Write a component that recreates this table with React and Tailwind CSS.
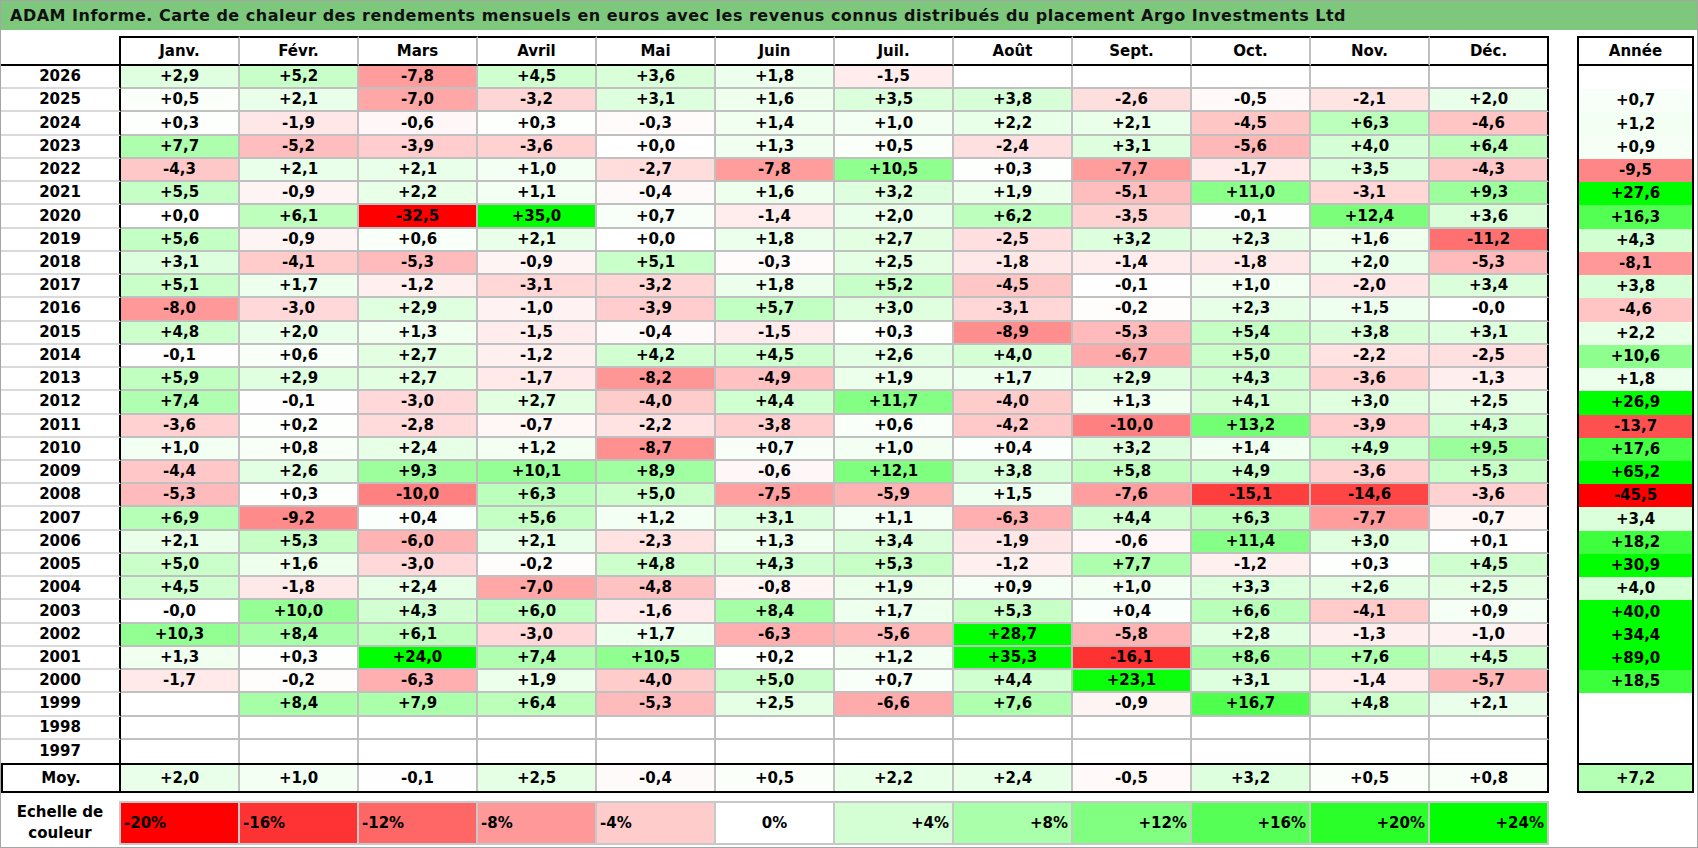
import React from "react";

const MONTHS = ["Janv.", "Févr.", "Mars", "Avril", "Mai", "Juin", "Juil.", "Août", "Sept.", "Oct.", "Nov.", "Déc."];

// year | 12 months | annual  ("." = empty)
const RAW = [
  "2026 +2,9 +5,2 -7,8 +4,5 +3,6 +1,8 -1,5 . . . . . .",
  "2025 +0,5 +2,1 -7,0 -3,2 +3,1 +1,6 +3,5 +3,8 -2,6 -0,5 -2,1 +2,0 +0,7",
  "2024 +0,3 -1,9 -0,6 +0,3 -0,3 +1,4 +1,0 +2,2 +2,1 -4,5 +6,3 -4,6 +1,2",
  "2023 +7,7 -5,2 -3,9 -3,6 +0,0 +1,3 +0,5 -2,4 +3,1 -5,6 +4,0 +6,4 +0,9",
  "2022 -4,3 +2,1 +2,1 +1,0 -2,7 -7,8 +10,5 +0,3 -7,7 -1,7 +3,5 -4,3 -9,5",
  "2021 +5,5 -0,9 +2,2 +1,1 -0,4 +1,6 +3,2 +1,9 -5,1 +11,0 -3,1 +9,3 +27,6",
  "2020 +0,0 +6,1 -32,5 +35,0 +0,7 -1,4 +2,0 +6,2 -3,5 -0,1 +12,4 +3,6 +16,3",
  "2019 +5,6 -0,9 +0,6 +2,1 +0,0 +1,8 +2,7 -2,5 +3,2 +2,3 +1,6 -11,2 +4,3",
  "2018 +3,1 -4,1 -5,3 -0,9 +5,1 -0,3 +2,5 -1,8 -1,4 -1,8 +2,0 -5,3 -8,1",
  "2017 +5,1 +1,7 -1,2 -3,1 -3,2 +1,8 +5,2 -4,5 -0,1 +1,0 -2,0 +3,4 +3,8",
  "2016 -8,0 -3,0 +2,9 -1,0 -3,9 +5,7 +3,0 -3,1 -0,2 +2,3 +1,5 -0,0 -4,6",
  "2015 +4,8 +2,0 +1,3 -1,5 -0,4 -1,5 +0,3 -8,9 -5,3 +5,4 +3,8 +3,1 +2,2",
  "2014 -0,1 +0,6 +2,7 -1,2 +4,2 +4,5 +2,6 +4,0 -6,7 +5,0 -2,2 -2,5 +10,6",
  "2013 +5,9 +2,9 +2,7 -1,7 -8,2 -4,9 +1,9 +1,7 +2,9 +4,3 -3,6 -1,3 +1,8",
  "2012 +7,4 -0,1 -3,0 +2,7 -4,0 +4,4 +11,7 -4,0 +1,3 +4,1 +3,0 +2,5 +26,9",
  "2011 -3,6 +0,2 -2,8 -0,7 -2,2 -3,8 +0,6 -4,2 -10,0 +13,2 -3,9 +4,3 -13,7",
  "2010 +1,0 +0,8 +2,4 +1,2 -8,7 +0,7 +1,0 +0,4 +3,2 +1,4 +4,9 +9,5 +17,6",
  "2009 -4,4 +2,6 +9,3 +10,1 +8,9 -0,6 +12,1 +3,8 +5,8 +4,9 -3,6 +5,3 +65,2",
  "2008 -5,3 +0,3 -10,0 +6,3 +5,0 -7,5 -5,9 +1,5 -7,6 -15,1 -14,6 -3,6 -45,5",
  "2007 +6,9 -9,2 +0,4 +5,6 +1,2 +3,1 +1,1 -6,3 +4,4 +6,3 -7,7 -0,7 +3,4",
  "2006 +2,1 +5,3 -6,0 +2,1 -2,3 +1,3 +3,4 -1,9 -0,6 +11,4 +3,0 +0,1 +18,2",
  "2005 +5,0 +1,6 -3,0 -0,2 +4,8 +4,3 +5,3 -1,2 +7,7 -1,2 +0,3 +4,5 +30,9",
  "2004 +4,5 -1,8 +2,4 -7,0 -4,8 -0,8 +1,9 +0,9 +1,0 +3,3 +2,6 +2,5 +4,0",
  "2003 -0,0 +10,0 +4,3 +6,0 -1,6 +8,4 +1,7 +5,3 +0,4 +6,6 -4,1 +0,9 +40,0",
  "2002 +10,3 +8,4 +6,1 -3,0 +1,7 -6,3 -5,6 +28,7 -5,8 +2,8 -1,3 -1,0 +34,4",
  "2001 +1,3 +0,3 +24,0 +7,4 +10,5 +0,2 +1,2 +35,3 -16,1 +8,6 +7,6 +4,5 +89,0",
  "2000 -1,7 -0,2 -6,3 +1,9 -4,0 +5,0 +0,7 +4,4 +23,1 +3,1 -1,4 -5,7 +18,5",
  "1999 . +8,4 +7,9 +6,4 -5,3 +2,5 -6,6 +7,6 -0,9 +16,7 +4,8 +2,1 .",
  "1998 . . . . . . . . . . . . .",
  "1997 . . . . . . . . . . . . .",
];

const AVG = ["+2,0", "+1,0", "-0,1", "+2,5", "-0,4", "+0,5", "+2,2", "+2,4", "-0,5", "+3,2", "+0,5", "+0,8"];
const AVG_YEAR = "+7,2";

const SCALE = [
  { label: "-20%", bg: "bg-[#ff0000]", align: "justify-start pl-[3px]" },
  { label: "-16%", bg: "bg-[#ff3333]", align: "justify-start pl-[3px]" },
  { label: "-12%", bg: "bg-[#ff6666]", align: "justify-start pl-[3px]" },
  { label: "-8%", bg: "bg-[#ff9999]", align: "justify-start pl-[3px]" },
  { label: "-4%", bg: "bg-[#ffcccc]", align: "justify-start pl-[3px]" },
  { label: "0%", bg: "bg-white", align: "justify-center" },
  { label: "+4%", bg: "bg-[#d4ffd4]", align: "justify-end pr-[3px]" },
  { label: "+8%", bg: "bg-[#aaffaa]", align: "justify-end pr-[3px]" },
  { label: "+12%", bg: "bg-[#80ff80]", align: "justify-end pr-[3px]" },
  { label: "+16%", bg: "bg-[#55ff55]", align: "justify-end pr-[3px]" },
  { label: "+20%", bg: "bg-[#2aff2a]", align: "justify-end pr-[3px]" },
  { label: "+24%", bg: "bg-[#00ff00]", align: "justify-end pr-[3px]" },
];

const rows = RAW.map((line) => {
  const parts = line.split(" ");
  const vals = parts.slice(1).map((p) => (p === "." ? null : p));
  return { year: parts[0], months: vals.slice(0, 12), total: vals[12] };
});

// same colour ramp as the legend: red at -20, green at +24
const heat = (s) => {
  if (!s) return "#ffffff";
  const v = parseFloat(s.replace(",", "."));
  if (v < 0) {
    const c = Math.round(255 * (1 - Math.min(-v / 20, 1)));
    return `rgb(255,${c},${c})`;
  }
  const c = Math.round(255 * (1 - Math.min(v / 24, 1)));
  return `rgb(${c},255,${c})`;
};

const Cell = ({ value, last, bottom }) => (
  <div
    className={`w-[119px] h-full flex items-center justify-center border-r-2 ${
      last ? "border-r-black" : "border-r-[#c0c0c0]"
    } ${bottom ? "border-b-2 border-b-[#c0c0c0]" : ""}`}
    style={{ backgroundColor: heat(value) }}
  >
    {value}
  </div>
);

export default function App() {
  return (
    <div className="w-[1698px] h-[848px] bg-white border border-[#a6a6a6] flex flex-col font-['DejaVu_Sans',sans-serif] font-bold text-[15px] text-black leading-none">
      <div className="h-[29px] shrink-0 bg-[#7ec87e] flex items-center pl-[9px] text-[16px] tracking-[0.5px] text-[#111]">
        ADAM Informe. Carte de chaleur des rendements mensuels en euros avec les revenus connus distribués du placement Argo Investments Ltd
      </div>

      <div className="mt-[6px] flex">
        {/* main table */}
        <div className="w-[1548px] flex flex-col">
          <div className="h-[30px] flex">
            <div className="w-[120px] border-r-2 border-b-2 border-black" />
            {MONTHS.map((m, i) => (
              <div
                key={m}
                className={`w-[119px] flex items-center justify-center border-t-2 border-b-2 border-black border-r-2 ${
                  i === 11 ? "" : "border-r-[#c0c0c0]"
                }`}
              >
                {m}
              </div>
            ))}
          </div>

          <div className="h-[697px] flex flex-col">
            {rows.map((r, ri) => {
              const bottom = ri < rows.length - 1;
              return (
                <div key={r.year} className="flex-1 flex min-h-0">
                  <div
                    className={`w-[120px] flex items-center justify-center border-r-2 border-black ${
                      bottom ? "border-b-2 border-b-[#dadada]" : ""
                    }`}
                  >
                    {r.year}
                  </div>
                  {r.months.map((v, i) => (
                    <Cell key={i} value={v} last={i === 11} bottom={bottom} />
                  ))}
                </div>
              );
            })}
          </div>

          <div className="h-[30px] flex border-t-2 border-b-2 border-black">
            <div className="w-[120px] flex items-center justify-center border-l-2 border-r-2 border-black">Moy.</div>
            {AVG.map((v, i) => (
              <Cell key={i} value={v} last={i === 11} />
            ))}
          </div>

          <div className="mt-[8px] h-[44px] flex">
            <div className="w-[118px] flex flex-col items-center justify-center leading-[21px]">
              <span>Echelle de</span>
              <span>couleur</span>
            </div>
            <div className="flex border-l-2 border-[#c8c8c8]">
              {SCALE.map((s) => (
                <div
                  key={s.label}
                  className={`w-[119px] flex items-center border-y-2 border-r-2 border-[#c8c8c8] ${s.bg} ${s.align}`}
                >
                  {s.label}
                </div>
              ))}
            </div>
          </div>
        </div>

        {/* annual column */}
        <div className="ml-[28px] w-[117px] flex flex-col">
          <div className="h-[30px] flex items-center justify-center border-2 border-black">Année</div>
          <div className="h-[697px] flex flex-col border-l-2 border-r-2 border-black">
            {rows.map((r) => (
              <div
                key={r.year}
                className="flex-1 min-h-0 flex items-center justify-center"
                style={{ backgroundColor: heat(r.total) }}
              >
                {r.total}
              </div>
            ))}
          </div>
          <div
            className="h-[30px] flex items-center justify-center border-2 border-black"
            style={{ backgroundColor: heat(AVG_YEAR) }}
          >
            {AVG_YEAR}
          </div>
        </div>
      </div>
    </div>
  );
}
